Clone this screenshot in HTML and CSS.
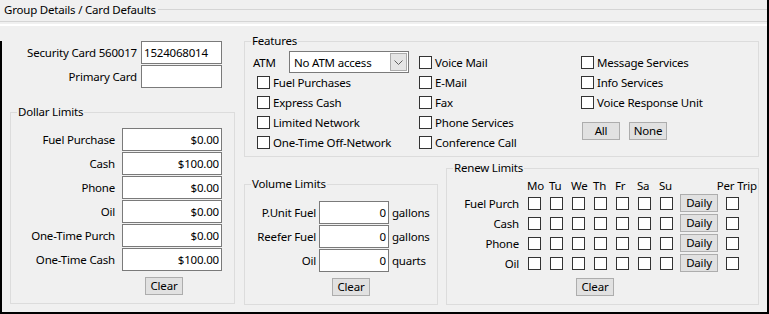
FILE: index.html
```html
<!DOCTYPE html>
<html lang="en">
<head>
    <meta charset="UTF-8">
    <title>Group Details / Card Defaults</title>
    <link rel="stylesheet" href="styles.css">
</head>
<body>
    <div class="window">
        <div class="title-bar">
            <span class="title">Group Details / Card Defaults</span>
            <span class="title-rule"></span>
        </div>

        <div class="panel">
          <div class="panel-body">
            <div class="left-col">
                <div class="card-row">
                    <label for="securityCard">Security Card 560017</label>
                    <input type="text" id="securityCard" class="textbox" value="1524068014">
                </div>
                <div class="card-row">
                    <label for="primaryCard">Primary Card</label>
                    <input type="text" id="primaryCard" class="textbox" value="">
                </div>

                <div class="group dollar-group">
                    <div class="group-title">Dollar Limits</div>
                    <div class="limit-grid">
                        <label>Fuel Purchase</label><input type="text" class="textbox num" value="$0.00">
                        <label>Cash</label><input type="text" class="textbox num" value="$100.00">
                        <label>Phone</label><input type="text" class="textbox num" value="$0.00">
                        <label>Oil</label><input type="text" class="textbox num" value="$0.00">
                        <label>One-Time Purch</label><input type="text" class="textbox num" value="$0.00">
                        <label>One-Time Cash</label><input type="text" class="textbox num" value="$100.00">
                    </div>
                    <button class="btn dollar-clear">Clear</button>
                </div>
            </div>

            <div class="right-col">
                <div class="group features-group">
                    <div class="group-title">Features</div>
                    <div class="features">
                        <div class="feature-col col-1">
                            <div class="atm-row">
                                <span class="atm-label">ATM</span>
                                <div class="combo">
                                    <span class="combo-text">No ATM access</span>
                                    <span class="combo-arrow">
                                        <svg width="9" height="5" viewBox="0 0 9 5"><path d="M0.5 0.5 L4.5 4.5 L8.5 0.5" fill="none" stroke="#606060" stroke-width="1"/></svg>
                                    </span>
                                </div>
                            </div>
                            <label class="check indent"><span class="box"></span>Fuel Purchases</label>
                            <label class="check indent"><span class="box"></span>Express Cash</label>
                            <label class="check indent"><span class="box"></span>Limited Network</label>
                            <label class="check indent"><span class="box"></span>One-Time Off-Network</label>
                        </div>
                        <div class="feature-col col-2">
                            <label class="check"><span class="box"></span>Voice Mail</label>
                            <label class="check"><span class="box"></span>E-Mail</label>
                            <label class="check"><span class="box"></span>Fax</label>
                            <label class="check"><span class="box"></span>Phone Services</label>
                            <label class="check"><span class="box"></span>Conference Call</label>
                        </div>
                        <div class="feature-col col-3">
                            <label class="check"><span class="box"></span>Message Services</label>
                            <label class="check"><span class="box"></span>Info Services</label>
                            <label class="check"><span class="box"></span>Voice Response Unit</label>
                            <div class="all-none">
                                <button class="btn">All</button>
                                <button class="btn">None</button>
                            </div>
                        </div>
                    </div>
                </div>

                <div class="bottom-row">
                    <div class="group volume-group">
                        <div class="group-title">Volume Limits</div>
                        <div class="volume-grid">
                            <label>P.Unit Fuel</label><input type="text" class="textbox num" value="0"><span>gallons</span>
                            <label>Reefer Fuel</label><input type="text" class="textbox num" value="0"><span>gallons</span>
                            <label>Oil</label><input type="text" class="textbox num" value="0"><span>quarts</span>
                        </div>
                        <button class="btn volume-clear">Clear</button>
                    </div>

                    <div class="group renew-group">
                        <div class="group-title">Renew Limits</div>
                        <div class="renew-grid" id="renewGrid">
                            <span></span>
                            <span class="day">Mo</span><span class="day">Tu</span><span class="day">We</span><span class="day">Th</span>
                            <span class="day">Fr</span><span class="day">Sa</span><span class="day">Su</span>
                            <span class="per-trip">Per Trip</span>
                        </div>
                        <button class="btn renew-clear">Clear</button>
                    </div>
                </div>
            </div>
          </div>
        </div>
    </div>

    <script>
        const renewGrid = document.getElementById('renewGrid');
        const renewRows = ['Fuel Purch', 'Cash', 'Phone', 'Oil'];

        renewRows.forEach(name => {
            let html = `<span class="row-label">${name}</span>`;
            for (let i = 0; i < 7; i++) {
                html += '<span class="cell"><span class="box"></span></span>';
            }
            html += '<span class="cell"><button class="btn">Daily</button></span>';
            html += '<span class="cell"><span class="box"></span></span>';
            renewGrid.insertAdjacentHTML('beforeend', html);
        });
    </script>
</body>
</html>
```

FILE: styles.css
```css
body {
    margin: 0;
    background-color: #f0f0f0;
    font-family: 'Noto Sans', sans-serif;
    font-size: 11.5px;
    letter-spacing: -0.2px;
    color: #000000;
}
.window {
    display: flex;
    flex-direction: column;
    width: 769px;
    height: 314px;
    box-sizing: border-box;
    background-color: #f0f0f0;
    border-right: 2px solid #000000;
    border-bottom: 2px solid #000000;
    overflow: hidden;
}
.title-bar {
    display: flex;
    align-items: flex-start;
    flex-shrink: 0;
    height: 21px;
    padding-left: 4px;
    border-bottom: 1px solid #d5d5d5;
}
.title {
    line-height: 16px;
    padding-top: 2px;
}
.title-rule {
    flex: 1;
    margin-top: 9px;
    margin-left: 2px;
    border-top: 1px solid #d5d5d5;
}
.panel {
    flex: 1;
    display: flex;
    flex-direction: column;
    margin-top: 2px;
    border-top: 2px solid #ffffff;
    padding-top: 15px;
}
.panel-body {
    flex: 1;
    display: flex;
    gap: 9px;
    padding-left: 8px;
    border-left: 2px solid #000000;
}
.left-col {
    width: 225px;
}
.card-row {
    display: grid;
    grid-template-columns: 127px 81px;
    column-gap: 4px;
    align-items: center;
    height: 23px;
    margin-bottom: 1px;
}
.card-row label,
.limit-grid label,
.volume-grid label {
    text-align: right;
    white-space: nowrap;
}
.textbox {
    box-sizing: border-box;
    height: 23px;
    margin: 0;
    padding: 0 2px;
    border: 1px solid #7a7a7a;
    border-radius: 0;
    background-color: #ffffff;
    font-family: inherit;
    font-size: inherit;
    letter-spacing: inherit;
    color: #000000;
    outline: none;
}
.textbox.num {
    text-align: right;
}
.group {
    box-sizing: border-box;
    border: 1px solid #dcdcdc;
}
.group-title {
    width: fit-content;
    line-height: 14px;
    margin: -8px 0 0 6px;
    padding: 0 1px;
    background-color: #f0f0f0;
}
.btn {
    box-sizing: border-box;
    display: block;
    width: 38px;
    height: 18px;
    margin: 0;
    padding: 0;
    border: 1px solid #adadad;
    border-radius: 0;
    background-color: #e1e1e1;
    font-family: inherit;
    font-size: inherit;
    letter-spacing: inherit;
    line-height: 14px;
    color: #000000;
}

.dollar-group {
    width: 225px;
    height: 192px;
    margin-top: 24px;
}
.limit-grid {
    display: grid;
    grid-template-columns: 104px 100px;
    grid-auto-rows: 23px;
    column-gap: 7px;
    row-gap: 1px;
    align-items: center;
    margin-top: 9px;
}
.limit-grid .textbox {
    width: 100px;
}
.dollar-clear {
    margin: 6px 0 0 134px;
}

.right-col {
    width: 515px;
}
.features-group {
    height: 116px;
}
.features {
    display: flex;
    margin-top: 4px;
    padding-left: 8px;
}
.feature-col.col-1 {
    width: 166px;
}
.feature-col.col-2 {
    width: 162px;
}
.atm-row {
    display: flex;
    align-items: center;
    height: 20px;
}
.atm-label {
    width: 36px;
}
.combo {
    box-sizing: border-box;
    display: flex;
    align-items: center;
    justify-content: space-between;
    width: 120px;
    height: 22px;
    padding: 0 1px 0 4px;
    border: 1px solid #7a7a7a;
    background-color: #ffffff;
}
.combo-arrow {
    box-sizing: border-box;
    display: flex;
    align-items: center;
    justify-content: center;
    width: 17px;
    height: 18px;
    border: 1px solid #acacac;
    background-color: #e5e5e5;
}
.check {
    display: flex;
    align-items: center;
    height: 20px;
    white-space: nowrap;
}
.check.indent {
    padding-left: 4px;
}
.box {
    box-sizing: border-box;
    display: inline-block;
    width: 13px;
    height: 13px;
    margin-right: 3px;
    border: 1px solid #333333;
    background-color: #ffffff;
}
.all-none {
    display: flex;
    gap: 9px;
    margin: 10px 0 0 1px;
}

.bottom-row {
    display: flex;
    align-items: flex-end;
    gap: 8px;
    margin-top: 11px;
}
.volume-group {
    width: 194px;
    height: 121px;
}
.volume-grid {
    display: grid;
    grid-template-columns: 71px 70px auto;
    grid-auto-rows: 23px;
    column-gap: 3px;
    row-gap: 1px;
    align-items: center;
    margin-top: 10px;
}
.volume-grid .textbox {
    width: 70px;
}
.volume-clear {
    margin: 6px 0 0 87px;
}
.renew-group {
    width: 313px;
    height: 137px;
}
.renew-grid {
    display: grid;
    grid-template-columns: 81px repeat(6, 22px) 20px 46px 32px;
    grid-template-rows: 14px;
    grid-auto-rows: 20px;
    align-items: center;
    margin-top: 4px;
}
.renew-grid .day {
    line-height: 14px;
    margin-left: -1px;
}
.renew-grid .per-trip {
    grid-column: 9 / span 2;
    text-align: right;
    line-height: 14px;
    padding-right: 1px;
}
.row-label {
    text-align: right;
    padding-right: 9px;
    white-space: nowrap;
}
.cell {
    display: flex;
    align-items: center;
}
.renew-clear {
    margin: 5px 0 0 129px;
}
```
